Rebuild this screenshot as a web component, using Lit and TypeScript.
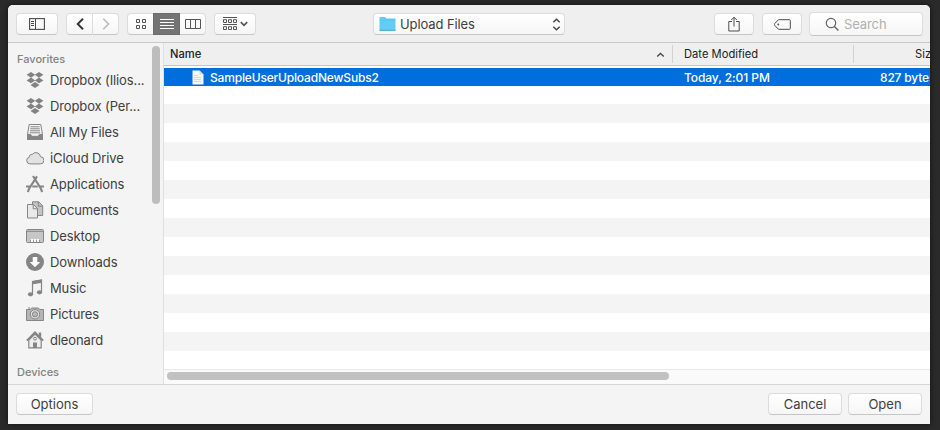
import { LitElement, html, css, svg } from "lit";
import { customElement } from "lit/decorators.js";

const icon = (w: number, h: number, body: unknown) =>
  html`<svg width=${w} height=${h} viewBox="0 0 ${w} ${h}" fill="none">${body}</svg>`;

const dropbox = icon(18, 18, svg`<g fill="#828282"><path d="M5 .9l4.2 2.9L5 6.8.6 3.8zM13 .9l4.4 2.9L13 6.8 8.8 3.8zM5 6.5l4.2 2.9L5 12.3.6 9.4zM13 6.5l4.4 2.9-4.4 2.9-4.2-2.9zM9 11l4.5 2.9L9 17.1l-4.5-3.2z"/></g>`);

const favorites: { name: string; glyph: unknown }[] = [
  { name: "Dropbox (Ilios...", glyph: dropbox },
  { name: "Dropbox (Per...", glyph: dropbox },
  { name: "All My Files", glyph: icon(18, 18, svg`<path d="M3.2 1.5h11.6l1.7 10v5h-15v-5z" fill="#f6f6f6" stroke="#858585"/><path d="M4.5 3.8h9M4.2 5.8h9.6M4 7.8h10M3.7 9.8h10.6" stroke="#858585"/><path d="M1.5 11.5h3.2l1 1.8h6.6l1-1.8h3.2v5h-15z" fill="#858585" stroke="#858585"/>`) },
  { name: "iCloud Drive", glyph: icon(18, 18, svg`<path d="M4 14.9a3.4 3.4 0 0 1-.7-6.7 2.4 2.4 0 0 1 2.9-2.7A4.6 4.6 0 0 1 14.5 7.7a3.6 3.6 0 0 1-.3 7.2z" fill="#e2e2e2" stroke="#858585"/>`) },
  { name: "Applications", glyph: icon(18, 18, svg`<path d="M0 11.5h4.8M6.3 11.5h5.5M13.2 11.5H18" stroke="#858585" stroke-width="2.2"/><path d="M7 1l7.8 12.5 1.4 3.5" stroke="#858585" stroke-width="2.1"/><path d="M11 1.4L3.2 13.5 1.8 17" stroke="#858585" stroke-width="2.1"/>`) },
  { name: "Documents", glyph: icon(18, 18, svg`<path d="M6.5 .8h6.2l4 4v9.7H6.5z" fill="#c4c4c4" stroke="#858585"/><path d="M12.3.8V5.2h4.4" stroke="#858585"/><path d="M1.5 3.5h6l4 4v9.5h-10z" fill="#e9e9e9" stroke="#858585"/><path d="M7.2 3.5V7.8h4.3" stroke="#858585"/>`) },
  { name: "Desktop", glyph: icon(18, 18, svg`<rect x=".5" y="2.5" width="17" height="13" rx="1" fill="#c6c6c6" stroke="#858585"/><path d="M1 4.3h16" stroke="#858585"/><path d="M4 12h10v3H4z" fill="#fff"/><path d="M4.5 15v-2.5M7.5 15v-2.5M10.5 15v-2.5M13.5 15v-2.5" stroke="#999"/>`) },
  { name: "Downloads", glyph: icon(18, 18, svg`<circle cx="9" cy="9" r="9" fill="#858585"/><path d="M6.7 4h4.6v5h3L9 14.3 3.7 9h3z" fill="#fff"/>`) },
  { name: "Music", glyph: icon(18, 18, svg`<path d="M6.5 15V2.5l9-1.5v12" stroke="#858585" stroke-width="1.2"/><path d="M6 2.3L16 .5v3.2L6 5.4z" fill="#858585"/><ellipse cx="4.5" cy="15.3" rx="2.6" ry="2.1" fill="#858585"/><ellipse cx="13.5" cy="13.3" rx="2.6" ry="2.1" fill="#858585"/>`) },
  { name: "Pictures", glyph: icon(18, 18, svg`<path d="M.5 4.5h4l1-1.5h7l1 1.5h4v11H.5z" fill="#b5b5b5" stroke="#858585"/><path d="M2 3h2" stroke="#858585"/><circle cx="9" cy="9.3" r="4.7" fill="#e0e0e0" stroke="#858585"/><circle cx="9" cy="9.3" r="2.6" fill="#b9b9b9" stroke="#858585"/>`) },
  { name: "dleonard", glyph: icon(18, 18, svg`<path d="M2.8 9v7.9h12.4V9L9 3z" fill="#eee" stroke="#858585" stroke-width="1.2"/><path d="M.8 9.6L9 1.4l8.2 8.2" stroke="#858585" stroke-width="1.9"/><path d="M12.8 1.5h2.4v5l-2.4-2z" fill="#858585"/><path d="M7 11.5h4V17H7z" fill="#858585"/><circle cx="9" cy="7.7" r="1.4" stroke="#858585"/>`) },
];

@customElement("app-root")
export class AppRoot extends LitElement {
  static styles = css`
    :host { display: block; box-sizing: border-box; width: 940px; height: 430px; padding: 5px 10px 6px 8px; background: #2a2a2a; font: 13px/18px Inter, "Liberation Sans", sans-serif; color: #404040; overflow: hidden; }
    * { box-sizing: border-box; }
    svg { display: block; flex: none; }
    .window { height: 419px; background: #f4f4f4; border-radius: 5px 5px 0 0; overflow: hidden; display: flex; flex-direction: column; box-shadow: 0 0 5px #111; }
    .toolbar { height: 38px; flex: none; background: #efefef; border-bottom: 1px solid #c9c9c9; display: flex; align-items: flex-start; padding: 8px 7px 0 8px; }
    .btn { height: 22px; background: linear-gradient(#fff, #f6f6f6); border: 1px solid #dcdcdc; border-bottom-color: #c6c6c6; border-radius: 4px; display: flex; align-items: center; justify-content: center; flex: none; }
    .side { width: 42px; margin-right: 8px; }
    .back { width: 27px; border-radius: 4px 0 0 4px; }
    .fwd { width: 26px; border-radius: 0 4px 4px 0; border-left: 0; margin-right: 8px; }
    .grid { width: 26px; border-radius: 4px 0 0 4px; border-right: 0; padding-left: 2px; }
    .list { width: 27px; background: #747474; border-color: #6b6b6b; border-radius: 0; }
    .cols { width: 26px; border-radius: 0 4px 4px 0; border-left: 0; margin-right: 8px; }
    .group { width: 42px; gap: 3px; padding-left: 1px; }
    .path { width: 192px; margin-left: 117px; justify-content: flex-start; padding: 0 3px 0 5px; }
    .path span { flex: 1; margin-left: 4px; font-size: 13px; letter-spacing: -0.1px; }
    .share { width: 40px; margin-left: 149px; margin-right: 8px; }
    .tag { width: 40px; }
    .search { width: 114px; height: 24px; margin: -1px 0 0 7px; justify-content: flex-start; padding-left: 15px; color: #b0b0b0; gap: 5px; }
    .search span { letter-spacing: -0.1px; }
    .body { height: 341px; flex: none; display: flex; }
    .sidebar { width: 155px; flex: none; position: relative; overflow: hidden; }
    .title { font-size: 11px; font-weight: 500; color: #828282; height: 14px; line-height: 14px; margin: 9px 0 1px 9px; }
    .devices { margin-top: 12px; }
    .fav { display: flex; align-items: center; height: 26px; padding-left: 18px; gap: 6px; white-space: nowrap; letter-spacing: -0.12px; }
    .thumb { position: absolute; right: 3px; top: 3px; width: 8px; height: 158px; border-radius: 4px; background: #bdbdbd; }
    .main { flex: 1; min-width: 0; border-left: 1px solid #e0e0e0; background: #fff; display: flex; flex-direction: column; overflow: hidden; }
    .head { height: 23px; flex: none; display: flex; align-items: center; background: #efefef; border-bottom: 1px solid #c4c4c4; font-size: 11.2px; color: #222; white-space: nowrap; }
    .c1 { width: 508px; flex: none; display: flex; align-items: center; justify-content: space-between; padding: 0 7px 0 6px; font-weight: 500; }
    .c1 svg { margin-top: 1px; }
    .c2 { width: 182px; height: 18px; flex: none; border: solid #d2d2d2; border-width: 0 1px; padding-left: 11px; }
    .c3 { padding-left: 61px; }
    .rows { flex: 1; margin-top: 2px; overflow: hidden; }
    .row { height: 19px; }
    .row.alt { background: #f4f4f4; }
    .row.sel { background: #006edc; color: #fff; display: flex; align-items: center; font-size: 12px; font-weight: 500; letter-spacing: -0.17px; white-space: nowrap; height: 18px; line-height: 20px; padding-top: 1px; }
    .row.sel + .row { height: 18px; }
    .row svg { margin-left: 28px; }
    .file { width: 474px; flex: none; margin-left: 6px; }
    .date { width: 196px; flex: none; letter-spacing: -0.08px; }
    .hscroll { height: 15px; flex: none; border-top: 1px solid #e8e8e8; background: #fafafa; padding: 2px 3px; }
    .hthumb { width: 502px; height: 8px; background: #c1c1c1; border-radius: 4px; }
    .footer { flex: 1; border-top: 1px solid #d6d6d6; display: flex; padding: 8px 8px 0; gap: 6px; }
    .opt { width: 77px; margin-right: auto; }
    .act { width: 74px; }
  `;

  render() {
    return html`<div class="window">
      <div class="toolbar">
        <div class="btn side">${icon(16, 12, svg`<rect x=".6" y=".6" width="14.8" height="10.8" stroke="#4b4b4b" stroke-width="1.1"/><path d="M6.5 1v10M2 3.5h3M2 5.5h3M2 7.5h3" stroke="#4b4b4b"/>`)}</div>
        <div class="btn back">${icon(8, 12, svg`<path d="M7 .8L1.7 6 7 11.2" stroke="#333" stroke-width="1.9"/>`)}</div>
        <div class="btn fwd">${icon(8, 12, svg`<path d="M1.3.8L6.5 6l-5.2 5.2" stroke="#b9b9b9" stroke-width="1.5"/>`)}</div>
        <div class="btn grid">${icon(11, 10, svg`<path d="M.5.5h3v3h-3zM6.5.5h3v3h-3zM.5 6.5h3v3h-3zM6.5 6.5h3v3h-3z" stroke="#555"/>`)}</div>
        <div class="btn list">${icon(14, 10, svg`<path d="M0 .5h14M0 3.5h14M0 6.5h14M0 9.5h14" stroke="#fff"/>`)}</div>
        <div class="btn cols">${icon(16, 10, svg`<path d="M.5.5h15v9H.5zM5.5.5v9M10.5.5v9" stroke="#555"/>`)}</div>
        <div class="btn group">${icon(14, 14, svg`<path d="M0 .5h14M0 7.5h14" stroke="#555"/><path d="M.5 2.7h3v2.8h-3zM5.5 2.7h3v2.8h-3zM10.5 2.7h3v2.8h-3zM.5 9.7h3v2.8h-3zM5.5 9.7h3v2.8h-3zM10.5 9.7h3v2.8h-3z" stroke="#555"/>`)}${icon(8, 6, svg`<path d="M.8 1.2L4 4.4l3.2-3.2" stroke="#555" stroke-width="1.7"/>`)}</div>
        <div class="btn path">${icon(17, 14, svg`<path d="M.5 0H6l1.5 1.5h9v12H.5z" fill="#62cef5"/><path d="M.5 3h16" stroke="#4bbde8" stroke-width=".6"/><path d="M.5 13.3h16" stroke="#3ca9d4"/>`)}<span>Upload Files</span>${icon(9, 13, svg`<path d="M1.3 4.2l3.2-3 3.2 3M1.3 8.8l3.2 3 3.2-3" stroke="#444" stroke-width="1.4"/>`)}</div>
        <div class="btn share">${icon(12, 16, svg`<path d="M4 5.5H.8V15h10.4V5.5H8M6 10.5V1.2M3.2 4L6 1.2 8.8 4" stroke="#4d4d4d"/>`)}</div>
        <div class="btn tag">${icon(17, 11, svg`<path d="M4.5.7h11q.8 0 .8.8v8q0 .8-.8.8h-11L.8 6.5q-.6-1 0-2z" stroke="#4d4d4d"/><circle cx="4.3" cy="5.5" r=".9" fill="#4d4d4d"/>`)}</div>
        <div class="btn search">${icon(14, 14, svg`<circle cx="6" cy="6" r="4.7" stroke="#666" stroke-width="1.2"/><path d="M9.4 9.4l4 4" stroke="#666" stroke-width="1.4"/>`)}<span>Search</span></div>
      </div>
      <div class="body">
        <div class="sidebar">
          <div class="title">Favorites</div>
          ${favorites.map((f) => html`<div class="fav">${f.glyph}<span>${f.name}</span></div>`)}
          <div class="title devices">Devices</div>
          <div class="thumb"></div>
        </div>
        <div class="main">
          <div class="head">
            <div class="c1"><span>Name</span>${icon(9, 6, svg`<path d="M1.2 4.5l3.3-3 3.3 3" stroke="#444" stroke-width="1.3"/>`)}</div>
            <div class="c2">Date Modified</div><div class="c3">Size</div>
          </div>
          <div class="rows">
            <div class="row sel">${icon(12, 15, svg`<path d="M.5.5h7l4 4v10H.5z" fill="#f6f6f6"/><path d="M7.5.5v4h4" fill="#d5d5d5"/><path d="M2 5.5h4M2 7.5h7M2 9.5h7M2 11.5h7" stroke="#ccc" stroke-width=".7"/>`)}<span class="file">SampleUserUploadNewSubs2</span><span class="date">Today, 2:01 PM</span><span>827 bytes</span></div>
            ${Array.from({ length: 15 }, (_, i) => html`<div class="row ${i % 2 ? "alt" : ""}"></div>`)}
          </div>
          <div class="hscroll"><div class="hthumb"></div></div>
        </div>
      </div>
      <div class="footer"><div class="btn opt">Options</div><div class="btn act">Cancel</div><div class="btn act">Open</div></div>
    </div>`;
  }
}
